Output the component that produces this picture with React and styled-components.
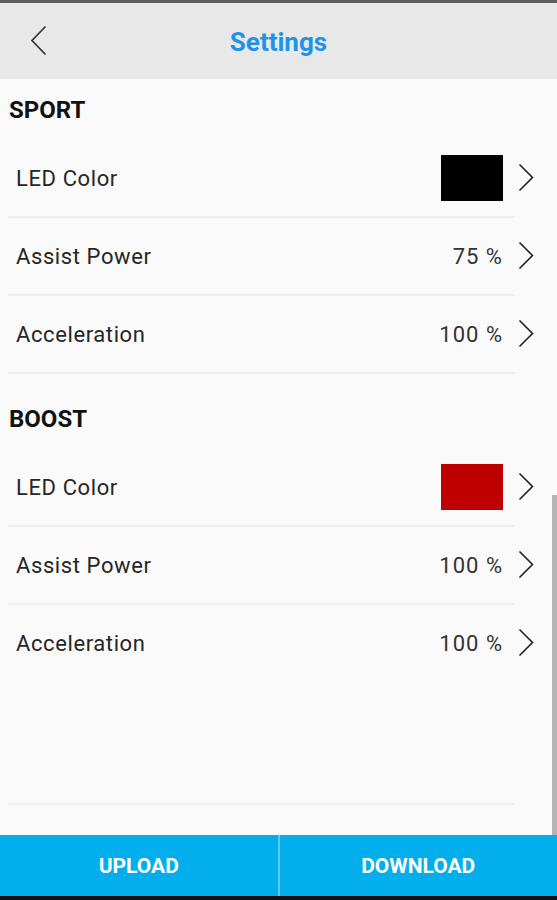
import React from "react";
import styled, { createGlobalStyle } from "styled-components";

const GlobalStyle = createGlobalStyle`
  html, body {
    margin: 0;
    padding: 0;
    background: #fafafa;
  }
  * {
    box-sizing: border-box;
  }
`;

const Screen = styled.div`
  width: 557px;
  height: 900px;
  display: flex;
  flex-direction: column;
  font-family: Roboto, "Liberation Sans", sans-serif;
  background: #fafafa;
  overflow: hidden;
`;

const StatusEdge = styled.div`
  height: 3px;
  background: #5e5e5e;
`;

const Header = styled.div`
  height: 76px;
  background: #e8e8e8;
  display: flex;
  align-items: center;
  justify-content: center;
  position: relative;
`;

const BackButton = styled.button`
  position: absolute;
  left: 24px;
  top: 50%;
  transform: translateY(-50%);
  width: 30px;
  height: 40px;
  border: 0;
  background: transparent;
  padding: 0;
  display: flex;
  align-items: center;
  justify-content: center;
`;

const Title = styled.div`
  font-size: 26px;
  font-weight: 700;
  color: #1f93e6;
  margin-top: 2px;
`;

const Content = styled.div`
  flex: 1;
  display: flex;
  flex-direction: column;
  position: relative;
`;

const Section = styled.div`
  display: flex;
  flex-direction: column;
  margin-bottom: ${(p) => (p.$last ? "0" : "14px")};
`;

const SectionTitle = styled.div`
  height: 61px;
  display: flex;
  align-items: center;
  padding-left: 9px;
  font-size: 24px;
  font-weight: 700;
  color: #111;
`;

const Row = styled.div`
  height: 76px;
  margin-left: 8px;
  padding: 0 23px 0 8px;
  display: flex;
  align-items: center;
`;

const Label = styled.div`
  flex: 1;
  font-size: 22px;
  color: #262626;
  letter-spacing: 0.6px;
`;

const Value = styled.div`
  font-size: 22px;
  color: #333;
  letter-spacing: 1px;
`;

const Swatch = styled.div`
  width: 62px;
  height: 46px;
  background: ${(p) => p.$color};
`;

const Chevron = styled.div`
  width: 16px;
  margin-left: 15px;
  display: flex;
  align-items: center;
`;

const Divider = styled.div`
  height: 2px;
  margin: 0 42px 0 8px;
  background: #efefef;
`;

const Spacer = styled.div`
  flex: 1;
`;

const BottomDivider = styled(Divider)`
  margin-bottom: 30px;
`;

const Scrollbar = styled.div`
  position: absolute;
  right: 0;
  bottom: 0;
  width: 5px;
  height: 340px;
  background: #b5b5b5;
`;

const ActionBar = styled.div`
  height: 61px;
  background: #02aeec;
  display: grid;
  grid-template-columns: 1fr 2px 1fr;
`;

const ActionButton = styled.button`
  border: 0;
  background: transparent;
  color: #fff;
  font-family: Roboto, "Liberation Sans", sans-serif;
  font-size: 21px;
  font-weight: 700;
  padding: 0;
`;

const ActionSep = styled.div`
  background: #5dcbf4;
`;

const NavEdge = styled.div`
  height: 4px;
  background: #111;
`;

const sections = [
  {
    title: "SPORT",
    rows: [
      { label: "LED Color", color: "#000000" },
      { label: "Assist Power", value: "75 %" },
      { label: "Acceleration", value: "100 %" },
    ],
  },
  {
    title: "BOOST",
    rows: [
      { label: "LED Color", color: "#bf0000" },
      { label: "Assist Power", value: "100 %" },
      { label: "Acceleration", value: "100 %" },
    ],
  },
];

function RightArrow() {
  return (
    <svg width="16" height="30" viewBox="0 0 16 30">
      <polyline points="1.5,1.5 14.5,14.5 1.5,27.5" fill="none" stroke="#222" strokeWidth="1.6" />
    </svg>
  );
}

function BackArrow() {
  return (
    <svg width="18" height="32" viewBox="0 0 18 32">
      <polyline points="15.5,1.5 2,15.5 15.5,29.5" fill="none" stroke="#333" strokeWidth="1.7" />
    </svg>
  );
}

export default function App() {
  return (
    <Screen>
      <GlobalStyle />
      <StatusEdge />
      <Header>
        <BackButton>
          <BackArrow />
        </BackButton>
        <Title>Settings</Title>
      </Header>
      <Content>
        {sections.map((s, si) => (
          <Section key={s.title} $last={si === sections.length - 1}>
            <SectionTitle>{s.title}</SectionTitle>
            {s.rows.map((r, i) => (
              <React.Fragment key={r.label}>
                <Row>
                  <Label>{r.label}</Label>
                  {r.color ? <Swatch $color={r.color} /> : <Value>{r.value}</Value>}
                  <Chevron>
                    <RightArrow />
                  </Chevron>
                </Row>
                {!(si === sections.length - 1 && i === s.rows.length - 1) && <Divider />}
              </React.Fragment>
            ))}
          </Section>
        ))}
        <Spacer />
        <BottomDivider />
        <Scrollbar />
      </Content>
      <ActionBar>
        <ActionButton>UPLOAD</ActionButton>
        <ActionSep />
        <ActionButton>DOWNLOAD</ActionButton>
      </ActionBar>
      <NavEdge />
    </Screen>
  );
}
